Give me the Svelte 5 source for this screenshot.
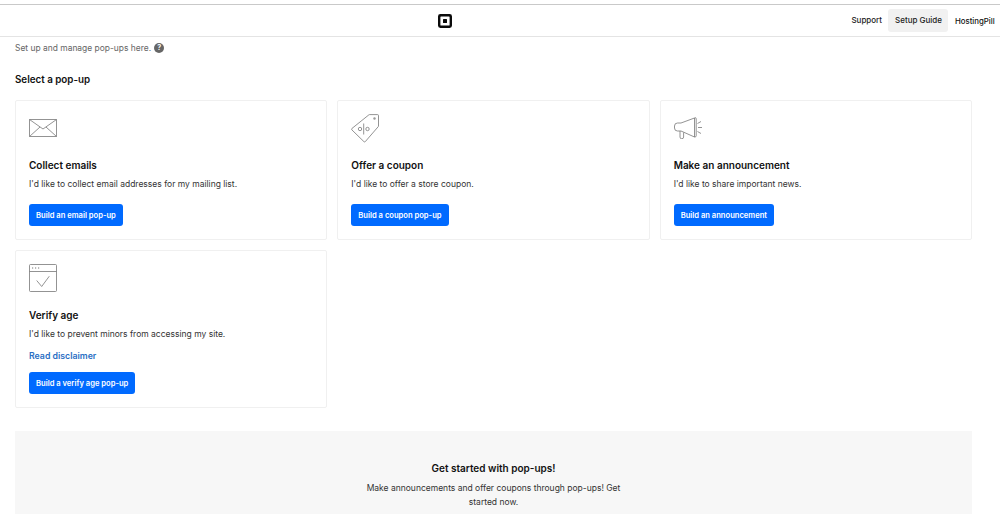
<script lang="ts">
  const cards = [
    { icon: "mail", title: "Collect emails", text: "I'd like to collect email addresses for my mailing list.", cta: "Build an email pop-up" },
    { icon: "tag", title: "Offer a coupon", text: "I'd like to offer a store coupon.", cta: "Build a coupon pop-up" },
    { icon: "horn", title: "Make an announcement", text: "I'd like to share important news.", cta: "Build an announcement" },
    { icon: "age", title: "Verify age", text: "I'd like to prevent minors from accessing my site.", link: "Read disclaimer", cta: "Build a verify age pop-up" },
  ];
</script>

<header class="topbar">
  <div class="logo-wrap">
    <svg class="logo" viewBox="0 0 14 14" width="14" height="14" aria-label="Square">
      <path fill-rule="evenodd" fill="#0b0b0b" d="M2.4 0h9.2A2.4 2.4 0 0 1 14 2.4v9.2a2.4 2.4 0 0 1-2.4 2.4H2.4A2.4 2.4 0 0 1 0 11.6V2.4A2.4 2.4 0 0 1 2.4 0zM3 2.4a.6.6 0 0 0-.6.6v8c0 .33.27.6.6.6h8a.6.6 0 0 0 .6-.6V3a.6.6 0 0 0-.6-.6z" />
      <rect x="5" y="5" width="4" height="4" rx=".5" fill="#0b0b0b" />
    </svg>
  </div>
  <nav class="nav">
    <a href="#support" class="nav-item">Support</a>
    <a href="#guide" class="nav-item active">Setup Guide</a>
    <a href="#site" class="nav-item site">HostingPill</a>
  </nav>
</header>

<main class="page">
  <p class="intro">
    Set up and manage pop-ups here.
    <span class="help">?</span>
  </p>
  <h1>Select a pop-up</h1>

  <div class="grid">
    {#each cards as card}
      <section class="card">
        <div class="icon">
          {#if card.icon === "mail"}
            <svg viewBox="0 0 28 18" width="28" height="18">
              <path d="M.5.5h27v17H.5zM.5.5 14 10 27.500.5M.5 17.500l10.500-9.500M27.500 17.500 17 8" />
            </svg>
          {:else if card.icon === "tag"}
            <svg viewBox="0 0 28 29" width="28" height="29">
              <path d="M18.500.6h8a1 1 0 0 1 1 1V12a1 1 0 0 1-.3.7L14.300 27.600a1 1 0 0 1-1.400 0L.9 15.900a1 1 0 0 1 0-1.400L17.800.9a1 1 0 0 1 .7-.3z" />
              <path d="M12.700 9.500v11" />
              <circle cx="9" cy="15" r="1.700" />
              <circle cx="16.500" cy="15" r="1.700" />
              <circle cx="23.500" cy="4.500" r="1.200" class="solid" />
            </svg>
          {:else if card.icon === "horn"}
            <svg viewBox="0 0 28 22" width="28" height="22">
              <path d="M20.500 1v19M20.500 1 7 6H3.500a3 3 0 0 0-3 3v2a3 3 0 0 0 3 3H7l13.500 6h.5a1.200 1.200 0 0 0 1.200-1.200V1.800A1.200 1.200 0 0 0 21 .6z" />
              <path d="M6 14v6a1.800 1.800 0 0 0 3.600 0v-4.500" />
              <path d="M23.500 6.500 27 4.500M24 10.500h4M23.500 14.500l3.500 2" />
            </svg>
          {:else}
            <svg viewBox="0 0 28 28" width="28" height="28">
              <rect x=".5" y=".5" width="27" height="27" rx="1" />
              <path d="M.5 7.500h27M7.700 16.500l5 6 7.600-10.300" />
              <path class="dots" d="M3 4h1.200M6 4h1.200M9 4h1.200" />
            </svg>
          {/if}
        </div>
        <h2>{card.title}</h2>
        <p>{card.text}</p>
        {#if card.link}
          <a class="link" href="#disclaimer">{card.link}</a>
        {/if}
        <button type="button" class="btn">{card.cta}</button>
      </section>
    {/each}
  </div>

  <section class="empty">
    <h2>Get started with pop-ups!</h2>
    <p>Make announcements and offer coupons through pop-ups! Get started now.</p>
  </section>
</main>

<style>
  :global(body) {
    font-family: Inter, "Liberation Sans", sans-serif;
    color: #111;
    background: #fff;
    overflow: hidden;
    height: 514px;
  }

  .topbar {
    position: relative;
    height: 31px;
    margin-top: 4px;
    border-top: 1px solid #c9c9c9;
    border-bottom: 1px solid #e4e4e4;
    display: flex;
    justify-content: flex-end;
    align-items: center;
  }

  .logo-wrap {
    position: absolute;
    left: 438px;
    top: 9px;
    line-height: 0;
  }

  .nav {
    display: flex;
    align-items: center;
    font-size: 8px;
    font-weight: 500;
  }

  .nav-item {
    color: #222;
    text-decoration: none;
    padding: 0 6px 0 7px;
    height: 23px;
    line-height: 23px;
    border-radius: 3px;
  }

  .active {
    background: #f1f1f1;
  }

  .site {
    padding: 1px 0 0 7px;
    height: 22px;
    width: 45px;
    font-size: 7.800px;
    color: #111;
  }

  .page {
    padding: 0 28px 0 15px;
  }

  .intro {
    margin: 0;
    height: 21px;
    display: flex;
    align-items: center;
    gap: 3px;
    font-size: 8.450px;
    color: #666;
  }

  .help {
    width: 10px;
    height: 10px;
    border-radius: 50%;
    background: #666;
    color: #fff;
    font-size: 7px;
    font-weight: 700;
    line-height: 10px;
    text-align: center;
  }

  h1 {
    margin: 14px 0 13px;
    font-size: 9.800px;
    line-height: 15px;
    font-weight: 600;
  }

  .grid {
    display: grid;
    grid-template-columns: repeat(3, 1fr);
    gap: 10px;
    align-items: start;
  }

  .card {
    border: 1px solid #f0f0f0;
    border-radius: 2px;
    padding: 11px 13px 13px;
    display: flex;
    flex-direction: column;
    align-items: flex-start;
  }

  .icon {
    height: 32px;
    margin-bottom: 14px;
    display: flex;
    align-items: center;
  }

  .icon svg {
    fill: none;
    stroke: #777;
    stroke-width: 0.8;
  }

  .icon .solid {
    fill: #999;
    stroke: none;
  }

  .icon .dots {
    stroke: #555;
  }

  .card h2 {
    margin: 0 0 5px;
    font-size: 10px;
    line-height: 14px;
    font-weight: 600;
  }

  .card p {
    margin: 0 0 13px;
    font-size: 8.500px;
    line-height: 14px;
    color: #333;
  }

  .link {
    margin: -5px 0 9px;
    font-size: 8.750px;
    line-height: 14px;
    font-weight: 600;
    color: #2a6fc4;
    text-decoration: none;
  }

  .btn {
    height: 22px;
    padding: 0 7px;
    border: 0;
    border-radius: 3px;
    background: #006aff;
    color: #fff;
    font-family: inherit;
    font-size: 7.600px;
    font-weight: 600;
  }

  .empty {
    margin-top: 23px;
    height: 90px;
    background: #f7f7f7;
    padding-top: 30px;
    box-sizing: border-box;
    text-align: center;
  }

  .empty h2 {
    margin: 0 0 6px;
    font-size: 10px;
    line-height: 14px;
    font-weight: 600;
  }

  .empty p {
    margin: 0 auto;
    width: 270px;
    font-size: 8.500px;
    line-height: 14px;
    color: #333;
  }
</style>
